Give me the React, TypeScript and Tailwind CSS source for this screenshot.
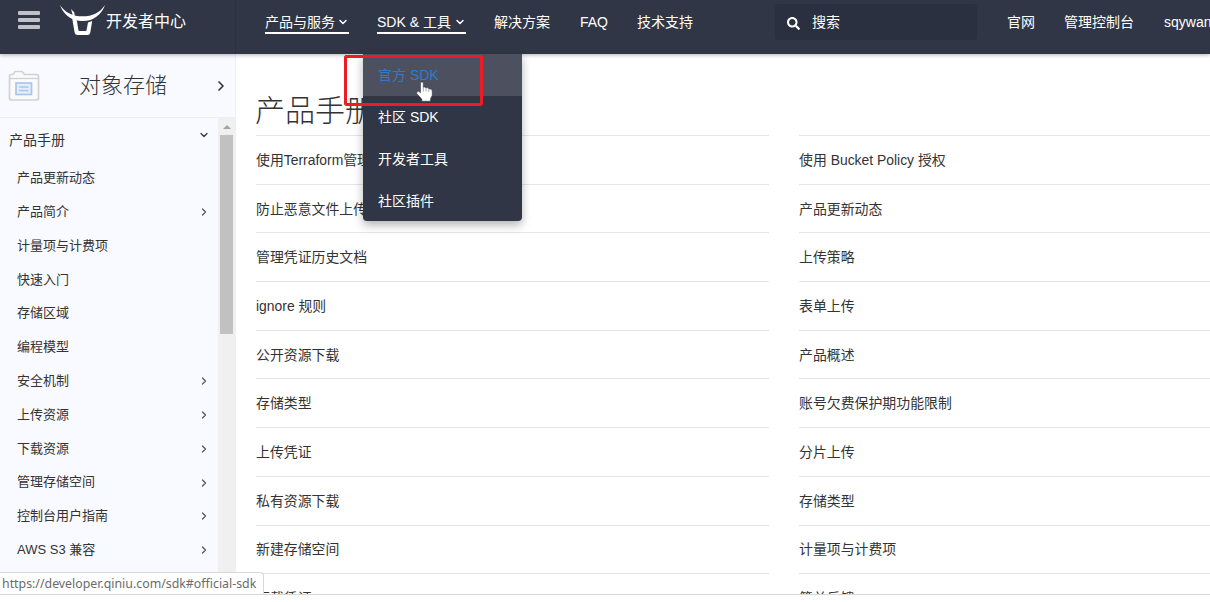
import { ChevronDown, ChevronRight } from 'lucide-react';
import { FaSearch } from 'react-icons/fa';

type SideItem = { label: string; more?: boolean };

const sideItems: SideItem[] = [
  { label: '产品更新动态' },
  { label: '产品简介', more: true },
  { label: '计量项与计费项' },
  { label: '快速入门' },
  { label: '存储区域' },
  { label: '编程模型' },
  { label: '安全机制', more: true },
  { label: '上传资源', more: true },
  { label: '下载资源', more: true },
  { label: '管理存储空间', more: true },
  { label: '控制台用户指南', more: true },
  { label: 'AWS S3 兼容', more: true },
];

const leftDocs = [
  '使用Terraform管理',
  '防止恶意文件上传',
  '管理凭证历史文档',
  'ignore 规则',
  '公开资源下载',
  '存储类型',
  '上传凭证',
  '私有资源下载',
  '新建存储空间',
  '下载凭证',
];

const rightDocs = [
  '使用 Bucket Policy 授权',
  '产品更新动态',
  '上传策略',
  '表单上传',
  '产品概述',
  '账号欠费保护期功能限制',
  '分片上传',
  '存储类型',
  '计量项与计费项',
  '简单反馈',
];

const sdkMenu = ['官方 SDK', '社区 SDK', '开发者工具', '社区插件'];

const Logo = () => (
  <svg className="w-[46px] h-[32px] shrink-0" viewBox="0 0 46 32" fill="#fff">
    <path d="M0 0C4 6 10 9.500 15.500 10.700Q22.500 12 29.500 10.700C36 9.300 41 6 45 0C42.500 7.500 36.500 13 30.500 14.900Q22.500 17 14.500 14.900C8.500 13 2.500 7.500 0 0Z" />
    <path d="M11 4L14.300 7.500L15 12L17 16.500L18.400 25Q18.600 26 19.500 26H25.500Q26.400 26 26.600 25L28 17.600L32.200 16L30.300 27.500Q29.900 30 27.500 30H17.500Q15.100 30 14.600 27.500L12.400 14.500Q13 8.500 11 4Z" />
  </svg>
);

const FolderIcon = () => (
  <svg className="w-8 h-8 shrink-0" viewBox="0 0 32 32" fill="none">
    <path d="M1.500 28V5.500Q1.500 4.500 3 4.500H5L7 1.500H14L16.500 4.500H29Q30.500 4.500 30.500 6V28Q30.500 30 28.500 30H3.500Q1.500 30 1.500 28Z" fill="#fafafb" stroke="#d0d2d6" strokeWidth="1.700" />
    <path d="M2 8.500H30" stroke="#d0d2d6" strokeWidth="1.300" />
    <rect x="8" y="13" width="15.500" height="11.500" fill="#e4eefa" stroke="#abc6e8" strokeWidth="1.700" />
    <path d="M11 17H20.500M11 20.500H20.500" stroke="#abc6e8" strokeWidth="1.500" />
  </svg>
);

const HandCursor = () => (
  <svg className="h-[21px] w-[17px]" viewBox="0 0 17 21">
    <path
      d="M4.500 1.800Q6 0 7.300 1.800V6.300Q8.800 5.500 9.800 6.900Q11.700 6 12.800 7.900Q15.500 7.400 16.200 9.800V14.500L14.500 17.800V20.200H5.800V18L0.800 12.800Q0.300 10.300 2.500 10.300L4.500 11.800Z"
      fill="#fff"
      stroke="#2b303e"
      strokeWidth="0.500"
    />
    <path d="M7.300 6.500V10.500M10 7.500V10.500M12.800 8.500V11" stroke="#6a6f7b" strokeWidth="0.600" />
  </svg>
);

const Header = () => (
  <header className="relative z-10 flex h-[54px] shrink-0 bg-[#303645] text-white text-[14px] shadow-[0_1px_4px_rgba(0,0,0,0.3)]">
    <div className="flex w-[236px] shrink-0 border-r border-[#2c3241] pl-[18px] pt-[5px]">
      <div className="flex w-[22px] flex-col gap-[3px] pt-[6px]">
        <span className="h-[4px] rounded-[1px] bg-[#bfc2c8]" />
        <span className="h-[4px] rounded-[1px] bg-[#bfc2c8]" />
        <span className="h-[4px] rounded-[1px] bg-[#bfc2c8]" />
      </div>
      <div className="ml-[20px] flex">
        <Logo />
        <span className="whitespace-nowrap pt-px text-[16px] leading-[32px]">开发者中心</span>
      </div>
    </div>
    <nav className="flex w-[539px] shrink-0 whitespace-nowrap pl-[29px] pt-[11px] leading-[22px]">
      <div className="flex h-[23px] w-[84px] items-center justify-between border-b-2 border-white">
        产品与服务
        <ChevronDown className="size-[12px]" strokeWidth={3} />
      </div>
      <div className="ml-[28px] flex h-[23px] w-[89px] items-center justify-between border-b-2 border-white">
        SDK &amp; 工具
        <ChevronDown className="size-[12px]" strokeWidth={3} />
      </div>
      <span className="ml-[28px] w-[86px]">解决方案</span>
      <span className="w-[57px]">FAQ</span>
      <span>技术支持</span>
    </nav>
    <div className="mt-[4px] flex h-[36px] w-[202px] shrink-0 items-center rounded bg-[#2b3040] pl-[12px]">
      <FaSearch className="mt-[2px] size-[13px]" />
      <span className="ml-[12px]">搜索</span>
    </div>
    <div className="flex whitespace-nowrap pl-[30px] pt-[11px] leading-[22px]">
      <span className="w-[57px]">官网</span>
      <span className="w-[100px]">管理控制台</span>
      <span>sqywan</span>
    </div>
  </header>
);

const Sidebar = () => (
  <aside className="flex w-[236px] shrink-0 flex-col bg-[#f9faff] text-[#333]">
    <div className="flex h-[64px] shrink-0 items-center border-b border-r border-[#eeeff3] pl-[8px]">
      <FolderIcon />
      <span className="ml-[39px] w-[134px] text-[22px] font-light">对象存储</span>
      <ChevronRight className="size-[16px]" strokeWidth={2.5} />
    </div>
    <div className="flex min-h-0 flex-1">
      <div className="w-[218px]">
        <div className="flex h-[43px] items-center justify-between pl-[9px] pr-[8px] pt-px text-[14px]">
          产品手册
          <ChevronDown className="mb-[10px] size-[12px]" strokeWidth={2.5} />
        </div>
        {sideItems.map((item) => (
          <div key={item.label} className="flex h-[33.8px] items-center justify-between pl-[17px] pr-[8px] text-[13px]">
            {item.label}
            {item.more && <ChevronRight className="mt-px size-[12px] text-[#555]" strokeWidth={2.5} />}
          </div>
        ))}
      </div>
      <div className="flex w-[18px] flex-col items-center bg-[#f0f0f0] pr-[1px]">
        <span className="mt-[7px] h-0 w-0 border-x-4 border-b-4 border-x-transparent border-b-[#a3a3a3]" />
        <span className="mt-[6px] h-[199px] w-[13px] bg-[#c1c1c1]" />
      </div>
    </div>
  </aside>
);

const DocList = ({ docs }: { docs: string[] }) => (
  <ul>
    {docs.map((doc) => (
      <li key={doc} className="flex h-[48.7px] items-center whitespace-nowrap border-t border-[#e5e5e5] pt-px">
        {doc}
      </li>
    ))}
  </ul>
);

const App = () => {
  return (
    <div className="relative flex h-[602px] w-[1210px] flex-col overflow-hidden bg-white font-['Liberation_Sans','Noto_Sans_CJK_SC',sans-serif]">
      <Header />
      <div className="flex h-[541px] shrink-0 overflow-hidden border-b border-[#d8d8d8]">
        <Sidebar />
        <main className="w-[974px] pl-[20px] text-[13.9px] text-[#333]">
          <h1 className="flex h-[81px] items-end pb-[2px] text-[30px] font-light -ml-px">产品手册</h1>
          <div className="grid grid-cols-[513px_513px] gap-[30px]">
            <DocList docs={leftDocs} />
            <DocList docs={rightDocs} />
          </div>
        </main>
      </div>

      {/* SDK dropdown, open on its first entry */}
      <ul className="absolute left-[363px] top-[54px] z-20 w-[159px] overflow-hidden rounded-b bg-[#303645] text-[14px] text-white shadow-[0_4px_10px_rgba(0,0,0,0.3)]">
        {sdkMenu.map((entry, i) => (
          <li
            key={entry}
            className={`flex h-[41.8px] items-center pl-[15px] pt-[2px] ${i === 0 ? 'bg-[#4d515f] text-[#2e7bcb]' : ''}`}
          >
            {entry}
          </li>
        ))}
      </ul>
      <div className="absolute left-[345px] top-[56px] z-30 h-[49px] w-[137px] rounded-[1px] border-[2.5px] border-[#ed1c24] outline-[0.5px] outline-[#ed1c24]" />
      <div className="absolute left-[416px] top-[81px] z-40">
        <HandCursor />
      </div>

      {/* browser status bubble */}
      <div className="absolute left-0 top-[572px] z-20 h-[22px] w-[264px] whitespace-nowrap rounded-tr border-r border-t border-[#d8d8d8] bg-white pl-[2px] font-['Noto_Sans',sans-serif] text-[12.35px] leading-[22px] text-[#6b6b6b]">
        https://developer.qiniu.com/sdk#official-sdk
      </div>
    </div>
  );
};

export default App;
